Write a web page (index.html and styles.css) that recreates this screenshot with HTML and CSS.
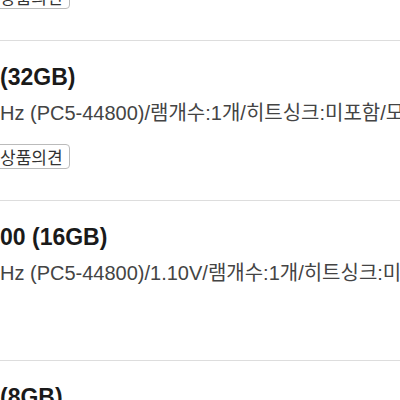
FILE: index.html
```html
<!DOCTYPE html>
<html>
    <head>
        <meta charset="UTF-8">
        <meta name="viewport" content="width=device-width, initial-scale=1.0">
        <link rel="stylesheet" href="styles.css">
    </head>
    <body>
        <ul class="productList">
            <li class="product">
                <p class="productTitle">00 (64GB)</p>
                <p class="productSpec">Hz (PC5-44800)/램개수:1개/히트싱크:미포함/모듈제조사:삼성전자</p>
                <button class="opinionButton">상품의견</button>
            </li>
            <li class="product">
                <p class="productTitle">(32GB)</p>
                <p class="productSpec">Hz (PC5-44800)/램개수:1개/히트싱크:미포함/모듈제조사:삼성전자</p>
                <button class="opinionButton">상품의견</button>
            </li>
            <li class="product">
                <p class="productTitle">00 (16GB)</p>
                <p class="productSpec">Hz (PC5-44800)/1.10V/램개수:1개/히트싱크:미포함</p>
            </li>
            <li class="product">
                <p class="productTitle">(8GB)</p>
                <p class="productSpec">Hz (PC5-44800)/램개수:1개/히트싱크:미포함</p>
                <button class="opinionButton">상품의견</button>
            </li>
        </ul>
    </body>
</html>
```

FILE: styles.css
```css
body {
    margin: 0;
    height: 400px;
    overflow: hidden;
    background-color: white;
    font-family: "Liberation Sans", "Noto Sans CJK KR", sans-serif;
    color: #222;
}

.productList {
    list-style: none;
    margin: -120px 0 0 0;
    padding: 0;
}

.product {
    box-sizing: border-box;
    height: 160px;
    border-top: 1px solid #ddd;
    padding: 22px 0 0 0;
}

.productTitle {
    margin: 0;
    font-size: 23px;
    font-weight: bold;
    line-height: 28px;
    color: #1a1a1a;
    white-space: nowrap;
}

.productSpec {
    margin: 9px 0 0 0;
    font-size: 20px;
    line-height: 26px;
    color: #444;
    white-space: nowrap;
}

.opinionButton {
    margin: 18px 0 0 -7px;
    height: 25px;
    padding: 0 6px 0 6px;
    font-family: "Noto Sans CJK KR", sans-serif;
    font-size: 17px;
    line-height: 23px;
    color: #333;
    background-color: white;
    border: 1px solid #bbb;
    border-radius: 4px;
}
```
